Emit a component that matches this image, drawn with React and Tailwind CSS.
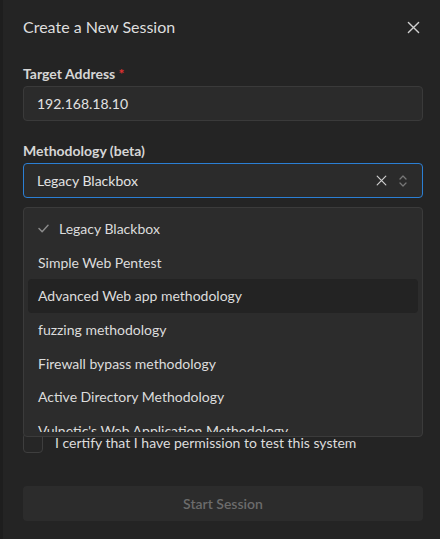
import React from "react";

const font = { fontFamily: 'Lato, "Noto Sans", sans-serif' };

function XIcon({ className }) {
  return (
    <svg viewBox="0 0 14 14" className={className} fill="none" stroke="currentColor" strokeWidth="1.5" strokeLinecap="round">
      <path d="M1.5 1.5 L12.5 12.5 M12.5 1.5 L1.5 12.5" />
    </svg>
  );
}

function UpDown() {
  return (
    <svg viewBox="0 0 10 14" className="w-[10px] h-[14px] text-[#777]" fill="none" stroke="currentColor" strokeWidth="1.3" strokeLinecap="round" strokeLinejoin="round">
      <path d="M2 5 L5 2 L8 5" />
      <path d="M2 9 L5 12 L8 9" />
    </svg>
  );
}

function Check() {
  return (
    <svg viewBox="0 0 12 10" className="w-[11px] h-[9px] text-[#8a8a8a]" fill="none" stroke="currentColor" strokeWidth="1.6" strokeLinecap="round" strokeLinejoin="round">
      <path d="M1 5 L4.5 8.5 L11 1.5" />
    </svg>
  );
}

const items = [
  "Simple Web Pentest",
  "Advanced Web app methodology",
  "fuzzing methodology",
  "Firewall bypass methodology",
  "Active Directory Methodology",
  "Vulnetic's Web Application Methodology",
];

export default function App() {
  return (
    <div className="w-[440px] h-[539px] bg-[#242424] flex overflow-hidden" style={font}>
      <div className="w-[3px] bg-[#1e1e1e]" />
      <div className="flex-1 pl-[20px] pr-[17px]">
        <div className="pt-[16px] h-[38px] flex items-start justify-between">
          <div className="h-[22px] leading-[22px] text-[16px] text-[#dedede]">Create a New Session</div>
          <div className="h-[22px] flex items-center pr-[3px]">
            <XIcon className="w-[13px] h-[13px] text-[#cfcfcf]" />
          </div>
        </div>

        <div className="mt-[26px] h-[20px] leading-[20px] text-[14px] font-bold text-[#d6d6d6]">
          Target Address <span className="text-[#e03131]">*</span>
        </div>
        <div className="mt-[2px] h-[35px] rounded-[4px] border border-[#3a3a3a] bg-[#2b2b2b] flex items-center pl-[13px] text-[14px] text-[#e2e2e2]">
          192.168.18.10
        </div>

        <div className="mt-[20px] h-[20px] leading-[20px] text-[14px] font-bold text-[#d6d6d6]">
          Methodology (beta)
        </div>
        <div className="relative mt-[2px]">
          <div className="h-[35px] rounded-[4px] border border-[#2b7fd4] bg-[#2b2b2b] flex items-center pl-[13px] pr-[14px] text-[14px] text-[#e2e2e2]">
            <span className="flex-1">Legacy Blackbox</span>
            <XIcon className="w-[11px] h-[11px] text-[#d0d0d0]" />
            <span className="ml-[11px] flex items-center"><UpDown /></span>
          </div>

          <div className="absolute left-0 right-0 top-[44px] h-[230px] rounded-[4px] border border-[#3b3b3b] bg-[#2c2c2c] p-[4px] z-10 text-[14px] text-[#dcdcdc]">
            <div className="h-full overflow-hidden">
              <div className="h-[33.6px] flex items-center pl-[10px]">
                <Check />
                <span className="ml-[10px]">Legacy Blackbox</span>
              </div>
              {items.map((t, i) => (
                <div
                  key={t}
                  className={
                    "h-[33.6px] flex items-center pl-[10px] rounded-[4px] " +
                    (i === 1 ? "bg-[#232323]" : "")
                  }
                >
                  {t}
                </div>
              ))}
            </div>
          </div>

          <div className="h-[235px]" />
          <div className="flex items-center h-[20px]">
            <div className="w-[20px] h-[20px] rounded-[4px] border border-[#3e3e3e] bg-[#262626]" />
            <span className="ml-[12px] text-[14px] text-[#dcdcdc] leading-[20px]">
              I certify that I have permission to test this system
            </span>
          </div>
        </div>

        <div className="mt-[33px] h-[35px] rounded-[4px] bg-[#2c2c2c] flex items-center justify-center text-[14px] font-semibold text-[#6b6b6b]">
          Start Session
        </div>
      </div>
    </div>
  );
}
